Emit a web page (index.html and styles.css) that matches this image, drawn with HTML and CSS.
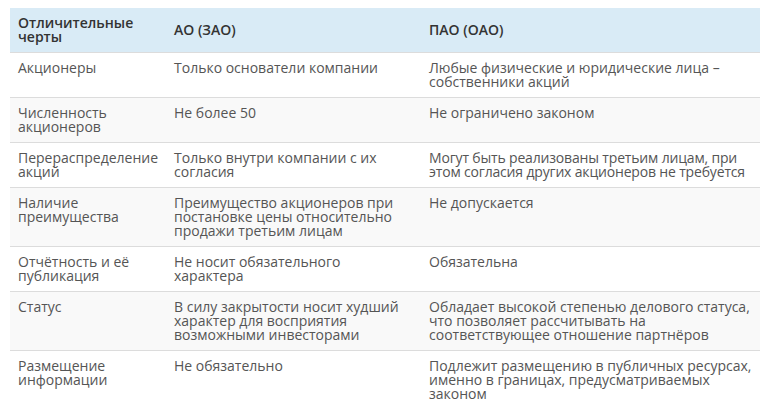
FILE: index.html
```html
<!DOCTYPE html>
<html lang="ru">
<head>
<meta charset="utf-8">
<link rel="stylesheet" href="styles.css">
</head>
<body>
<table class="cmp">
  <colgroup>
    <col class="c1">
    <col class="c2">
    <col class="c3">
  </colgroup>
  <thead>
    <tr><th>Отличительные черты</th><th>АО (ЗАО)</th><th>ПАО (ОАО)</th></tr>
  </thead>
  <tbody>
    <tr><td>Акционеры</td><td>Только основатели компании</td><td>Любые физические и юридические лица – собственники акций</td></tr>
    <tr><td>Численность акционеров</td><td>Не более 50</td><td>Не ограничено законом</td></tr>
    <tr><td>Перераспределение акций</td><td>Только внутри компании с их согласия</td><td class="fit">Могут быть реализованы третьим лицам, при этом согласия других акционеров не требуется</td></tr>
    <tr><td>Наличие преимущества</td><td>Преимущество акционеров при постановке цены относительно продажи третьим лицам</td><td>Не допускается</td></tr>
    <tr><td>Отчётность и её публикация</td><td>Не носит обязательного характера</td><td>Обязательна</td></tr>
    <tr><td>Статус</td><td>В силу закрытости носит худший характер для восприятия возможными инвесторами</td><td>Обладает высокой степенью делового статуса, что позволяет рассчитывать на соответствующее отношение партнёров</td></tr>
    <tr><td>Размещение информации</td><td>Не обязательно</td><td>Подлежит размещению в публичных ресурсах, именно в границах, предусматриваемых законом</td></tr>
  </tbody>
</table>
</body>
</html>
```

FILE: styles.css
```css
html, body { background: #fff; }
body {
  margin: 8px 4px 0 10px;
  font-family: "Open Sans", "Noto Sans", sans-serif;
  font-size: 14px;
  line-height: 14px;
  color: #555;
}
.cmp {
  width: 750px;
  border-collapse: collapse;
  table-layout: fixed;
}
.c1 { width: 156px; }
.c2 { width: 255px; }
.c3 { width: 339px; }
.cmp th, .cmp td {
  padding: 8px 8px;
  text-align: left;
  vertical-align: top;
}
.cmp th {
  background: #d9ebf6;
  color: #333;
  font-weight: 600;
  vertical-align: middle;
}
.cmp td { border-top: 1px solid #dcdcdc; }
.cmp tbody tr:nth-child(even) td { background: #f9f9f9; }
.cmp td.fit { letter-spacing: -0.17px; }
```
